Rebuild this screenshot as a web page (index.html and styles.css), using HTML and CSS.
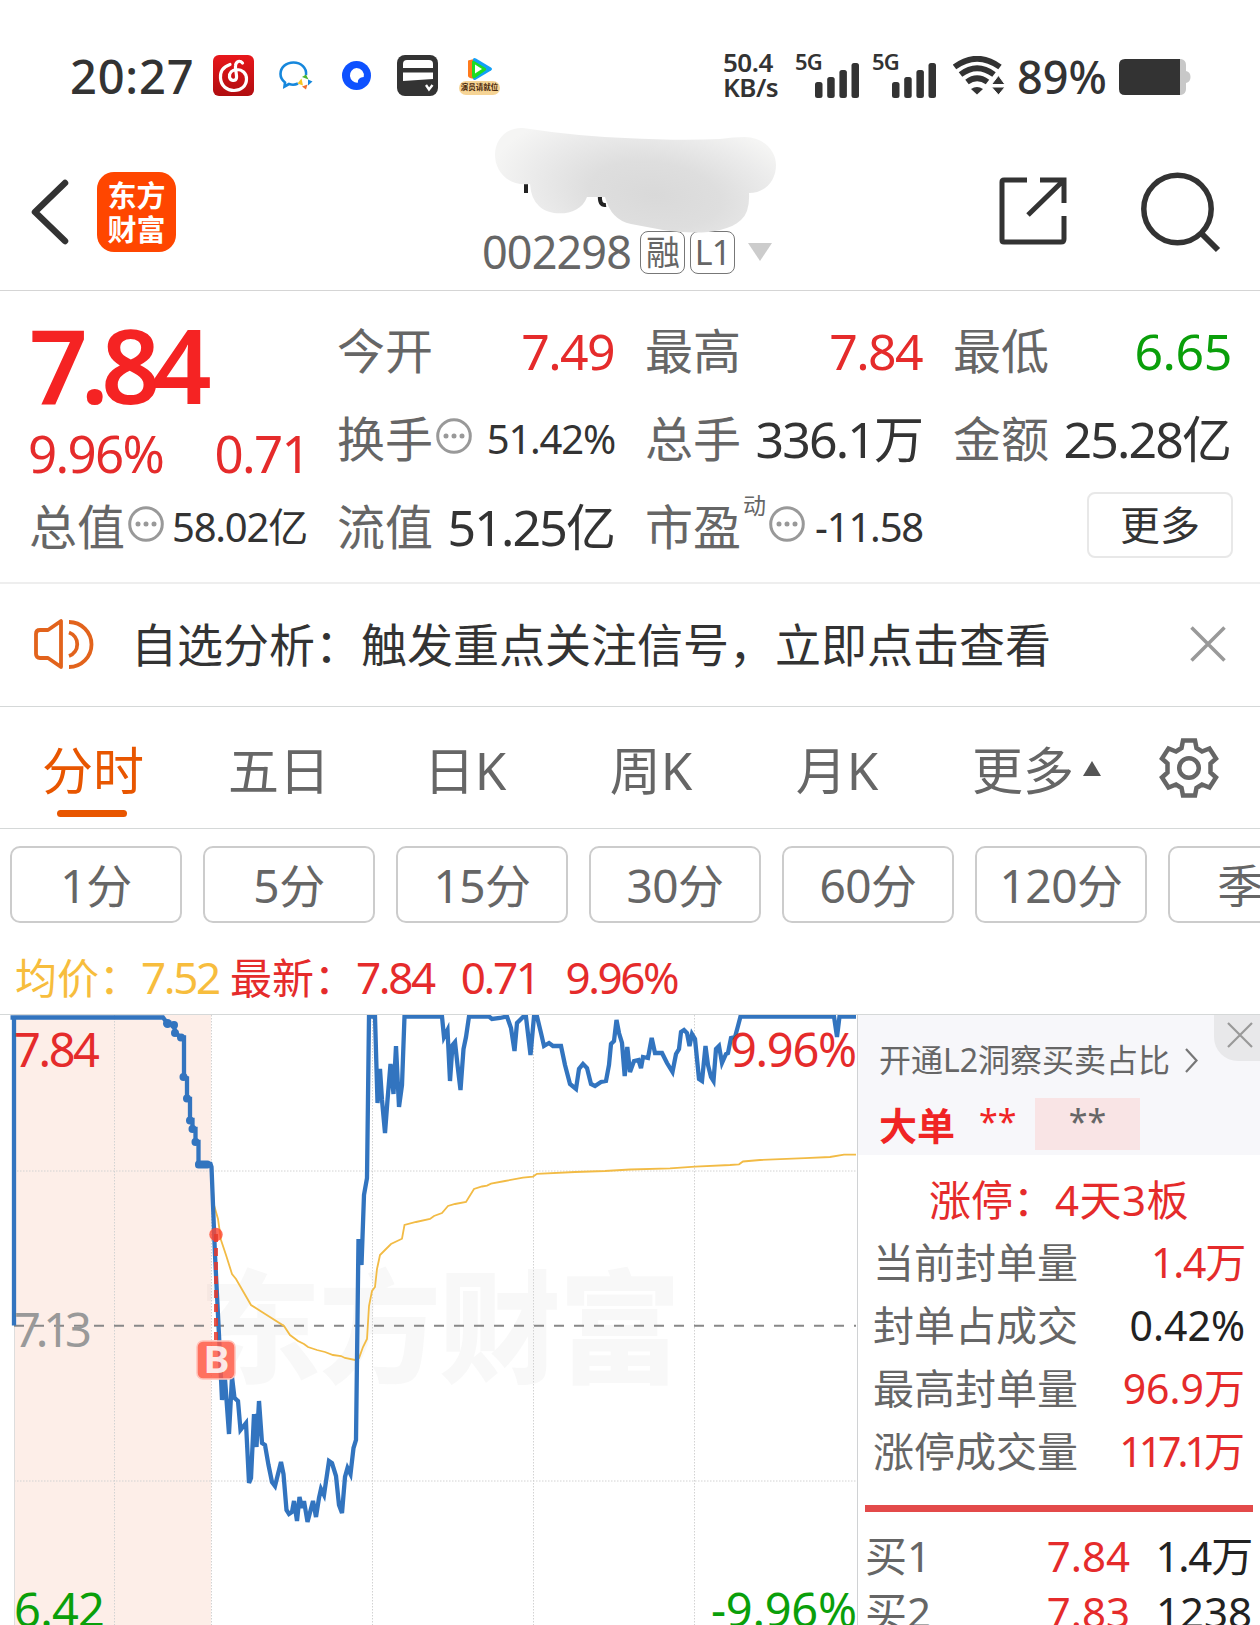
FILE: index.html
```html
<!DOCTYPE html>
<html lang="zh-CN">
<head>
  <meta charset="UTF-8">
  <meta name="viewport" content="width=device-width, initial-scale=1.0">
  <title>002298 分时</title>
  <link rel="stylesheet" href="styles.css">
</head>
<body>
  <div class="phone">
    <div class="status">
      <span class="time">20:27</span>
      <svg class="app-icon music" width="41" height="41" viewBox="0 0 41 41">
        <defs><linearGradient id="redGrad" x1="0" y1="0" x2="0" y2="1"><stop offset="0" stop-color="#e8171b"/><stop offset="1" stop-color="#b00d10"/></linearGradient></defs>
        <rect width="41" height="41" rx="6" fill="url(#redGrad)"/>
        <path d="M17 9.500C10 12 7 17 7.500 23C8 31 14 35.500 21 35.500C28 35.500 33.500 31 33.500 24C33.500 18 29 14.500 24 14.500C19 14.500 16 18 16.500 22C17 26 22.500 26.500 23.500 23C24 20 22 14 22.500 10.500C23 6 27 5 29.500 8" fill="none" stroke="#fff" stroke-width="3.200" stroke-linecap="round"/>
      </svg>
      <svg class="app-icon chat" width="34" height="29" viewBox="0 0 34 29">
        <path d="M27 14C28 7 22 1.500 14.500 1.500C7 1.500 1.500 6.500 1.500 13C1.500 17 3.500 19.500 6 21.500L5.500 25.500L10 23C13 24 16 24 19 22.500" fill="none" stroke="#1687dc" stroke-width="2.600"/>
        <path d="M23 16L27 13.500L29.500 18.500Z" fill="#4bb431"/>
        <path d="M29 18.500L33.500 20.500L29 24.500Z" fill="#1687dc"/>
        <path d="M28.500 23.500L27 28.500L23 25.500Z" fill="#ef6f2e"/>
        <path d="M24 24.500L18.500 22.500L22.500 17.500Z" fill="#f6c522"/>
      </svg>
      <svg class="app-icon" width="29" height="29" viewBox="0 0 29 29">
        <circle cx="14.500" cy="14.500" r="14.500" fill="#0e51ff"/>
        <path d="M14.500 7A7.300 7.300 0 1 0 16 21.600C15.500 18 18 16.500 21.700 16A7.300 7.300 0 0 0 14.500 7Z" fill="#fff"/>
      </svg>
      <svg class="app-icon wallet" width="41" height="41" viewBox="0 0 41 41">
        <rect width="41" height="41" rx="8" fill="#333"/>
        <path d="M6 13V9Q6 5 10 5H32Q36 5 36 9V13Z" fill="#fff"/>
        <path d="M6 17.500H36V24L6 26Z" fill="#fff"/>
        <path d="M29 30L32 34.500L35.500 30" fill="none" stroke="#fff" stroke-width="2.400"/>
      </svg>
      <span class="video">
        <svg width="26" height="24" viewBox="0 0 26 24">
          <path d="M1 4Q1 3 3 3L7 2V22L3 21Q1 20 1 19Z" fill="#ff7a1c"/>
          <path d="M6 3Q6 0 9 1.500L24 10.500Q26 12 24 13.500L9 22.500Q6 24 6 21Z" fill="#12a0f8"/>
          <path d="M5 5Q5 3 7 4L18.500 11Q20 12 18.500 13.500L8 21Q5 22 5 19Z" fill="#1fdc22"/>
          <path d="M8 7.500L15 12L8 16.500Z" fill="#fff"/>
        </svg>
        <small>演员请就位</small>
      </span>
      <span class="speed">50.4<br>KB/s</span>
      <span class="signal"><i>5G</i>
        <svg width="44" height="35" viewBox="0 0 44 35" fill="#333"><rect y="19" width="7.500" height="16" rx="2.500"/><rect x="12.200" y="14" width="7.500" height="21" rx="2.500"/><rect x="24.400" y="7" width="7.500" height="28" rx="2.500"/><rect x="36.500" width="7.500" height="35" rx="2.500"/></svg>
      </span>
      <span class="signal"><i>5G</i>
        <svg width="44" height="35" viewBox="0 0 44 35" fill="#333"><rect y="19" width="7.500" height="16" rx="2.500"/><rect x="12.200" y="14" width="7.500" height="21" rx="2.500"/><rect x="24.400" y="7" width="7.500" height="28" rx="2.500"/><rect x="36.500" width="7.500" height="35" rx="2.500"/></svg>
      </span>
      <svg class="wifi" width="52" height="39" viewBox="0 0 52 39">
        <g fill="none" stroke="#333" stroke-width="5.800">
          <path d="M1.500 11Q24 -5.500 47 11"/>
          <path d="M7.500 18.500Q24 6 41 18.500"/>
          <path d="M14 26Q24 18.500 34.500 26"/>
        </g>
        <path d="M18 33Q24 29 30 33L24 38.500Z" fill="#333"/>
        <path d="M38.500 28.500L45.500 19.500L52 28.500ZM38.500 31H52L45.500 39Z" fill="#333" stroke="#fff"/>
      </svg>
      <span class="percent">89%</span>
      <svg class="battery" width="72" height="36" viewBox="0 0 72 36">
        <path d="M58 0H62Q67 1 67 6V12Q71.500 13 71.500 18T67 24V30Q67 35 62 36H58Z" fill="#c8c8c8"/>
        <path d="M6 0H61V36H6Q0 36 0 30V6Q0 0 6 0Z" fill="#333"/>
      </svg>
    </div>

    <header class="header">
      <svg class="back" width="38" height="66" viewBox="0 0 38 66"><path d="M34 4L4 33L34 62" fill="none" stroke="#333" stroke-width="6.500" stroke-linecap="round" stroke-linejoin="round"/></svg>
      <div class="logo">东方<br>财富</div>
      <div class="stock">
        <svg class="smudge" width="282" height="108" viewBox="0 0 282 108">
          <defs><radialGradient id="smudgeGrad" gradientUnits="userSpaceOnUse" cx="0" cy="0" r="1" gradientTransform="translate(160 68) rotate(8) scale(165 82)"><stop offset="0" stop-color="#d9d9d9"/><stop offset=".4" stop-color="#dedede"/><stop offset=".75" stop-color="#ebebeb"/><stop offset="1" stop-color="#f5f5f4"/></radialGradient></defs>
          <path d="M31 54V66M105 68Q104 79 111 78" fill="none" stroke="#222" stroke-width="4"/>
          <path d="M28 1Q80 9 130 11Q185 14 225 12Q238 10 250 10C270 11 281 24 281 38C281 54 270 66 254 66Q255 85 246 93C230 108 195 107 168 103L136 97Q116 93 110 70L92 70C85 90 55 90 44 79Q36 72 35 57C12 60 0 43 0 28C0 12 12 0 28 1Z" fill="url(#smudgeGrad)"/>
        </svg>
        <div class="code-row">
          <span class="code">002298</span><span class="badge">融</span><span class="badge">L1</span><span class="caret"></span>
        </div>
      </div>
      <svg class="share" width="68" height="68" viewBox="0 0 68 68"><path d="M28 3H5Q3 3 3 5V63Q3 65 5 65H62Q65 65 65 62V39M41 3H65V26M65 3L29 38" fill="none" stroke="#333" stroke-width="5"/></svg>
      <svg class="search" width="80" height="81" viewBox="0 0 80 81"><circle cx="36.500" cy="37" r="33.700" fill="none" stroke="#333" stroke-width="5.500"/><path d="M60 61L77 78" stroke="#333" stroke-width="6"/></svg>
    </header>

    <section class="quote">
      <div class="price-box">
        <div class="price">7.84</div>
        <div class="change"><span>9.96%</span><span>0.71</span></div>
      </div>
      <div class="cell"><label>今开</label><b class="red">7.49</b></div>
      <div class="cell"><label>最高</label><b class="red">7.84</b></div>
      <div class="cell"><label>最低</label><b class="green">6.65</b></div>
      <div class="cell"><label>换手</label><svg class="dots" width="36" height="36" viewBox="0 0 36 36"><circle cx="18" cy="18" r="16.300"/><path d="M10 18h.01M18 18h.01M26 18h.01"/></svg><b class="small">51.42%</b></div>
      <div class="cell"><label>总手</label><b>336.1万</b></div>
      <div class="cell"><label>金额</label><b>25.28亿</b></div>
      <div class="cell"><label>总值</label><svg class="dots" width="36" height="36" viewBox="0 0 36 36"><circle cx="18" cy="18" r="16.300"/><path d="M10 18h.01M18 18h.01M26 18h.01"/></svg><b class="small">58.02亿</b></div>
      <div class="cell"><label>流值</label><b>51.25亿</b></div>
      <div class="cell"><label>市盈</label><sup>动</sup><svg class="dots" width="36" height="36" viewBox="0 0 36 36"><circle cx="18" cy="18" r="16.300"/><path d="M10 18h.01M18 18h.01M26 18h.01"/></svg><b class="small">-11.58</b></div>
      <div class="cell more-cell"><button class="more">更多</button></div>
    </section>

    <div class="notice">
      <svg width="60" height="52" viewBox="0 0 60 52" fill="none" stroke="#e2631c" stroke-width="3.800" stroke-linejoin="round">
        <path d="M2 16Q2 12 6 12H14L27 3V49L14 40H6Q2 40 2 36Z"/>
        <path d="M35 14.500A12.500 12.500 0 0 1 35 38M35 4A22.500 22.500 0 0 1 35 49"/>
      </svg>
      <p>自选分析：触发重点关注信号，立即点击查看</p>
      <svg width="36" height="36" viewBox="0 0 36 36"><path d="M1.500 1.500L34.500 34.500M34.500 1.500L1.500 34.500" stroke="#999" stroke-width="3.500"/></svg>
    </div>

    <nav class="tabs">
      <span class="active">分时</span>
      <span>五日</span>
      <span>日K</span>
      <span>周K</span>
      <span>月K</span>
      <span class="drop">更多</span>
      <svg class="gear" width="60" height="60" viewBox="0 0 60 60" fill="none" stroke="#666" stroke-width="4.500">
        <path d="M24 2.500H36L37.500 10L43 13.500L50.500 10.500L57 20.500L51.500 25.500V34.500L57 39.500L50.500 49.500L43 46.500L37.500 50L36 57.500H24L22.500 50L17 46.500L9.500 49.500L3 39.500L8.500 34.500V25.500L3 20.500L9.500 10.500L17 13.500L22.500 10Z"/>
        <circle cx="30" cy="30" r="9.800"/>
      </svg>
    </nav>

    <div class="periods">
      <span>1分</span><span>5分</span><span>15分</span><span>30分</span><span>60分</span><span>120分</span><span>季K</span>
    </div>

    <div class="legend">
      <span class="avg">均价：<em>7.52</em></span>
      <span class="red">最新：<em>7.84</em><em>0.71</em><em>9.96%</em></span>
    </div>

    <div class="main">
      <svg class="chart" width="857" height="610" viewBox="0 0 857 610">
        <rect x="14" width="197" height="610" fill="#fdeee8"/>
        <text class="watermark" x="199" y="358" textLength="482">东方财富</text>
        <g class="grid">
          <path d="M114.500 0V610M211.500 0V610M372.500 0V610M533.500 0V610M694.500 0V610M14 156H856M14 466H856"/>
        </g>
        <path d="M14.500 311V610" stroke="#ddd"/>
        <path class="base" d="M14 310.700H856"/>
        <path class="avg-line" d="M212 160L214 190L218 204L221 225L226 240L232 259L236 264L251 290L262 297L284 311L290 320L298 326L304 329L308 332L317 335L325 337L333 340L341 341L345 343L355 345L359 343L363 332L367 324L369 291L372 276L375 272L377 254L380 240L386 234L391 229L402 223.700L404.500 210L416 207L430 204L434 201L442 198L448 191L455 189L466 187L474 174L482 171.500L487 170.600L491 168.600L505 166L523 162.700L533 161.600L537 158.800L575 157L605 156L630 154.500L670 153.300L695 151.600L730 150L739 149.300L743 146.500L760 145L805 143.200L830 142L844 139.700H856"/>
        <path class="price-line" d="M10.500 2.500H163L168 9H173L176 18.500L181 22.500H184V62L187 63V84H190V105H192.500V114H195.500V127H198.500V149H210.500L211.500 152L215 240L219 320L222 385L225 364L229 419L232 362L234.500 383L238 386L240.500 415L246 408L249 468L251 463L254 399L256.500 432L259 386L262 428L265 430L268.500 450L272 467L275 471L281 447L283.500 459L286.500 495L289 499L292 497L294 486L297 506L299.500 482L302 493L304 486L307.500 507L313 486L316 502L319 483L321 474L324 480L329 446L332 448L336 461L339 490L342 498L345 462L347.500 453L350.500 459L353.500 433L356 425L358.500 224L361.500 250L364 180L367 163L369 1.500H375L377.500 88L380 54L382 85L385 118L387.500 85L390.500 49L393.500 79L396 31L399 92L402 70L404.500 1.500H442L444 22L447.500 15L450 66L452.500 30L455 27L457.500 50L460.500 75L463.500 34L466 22L469 1.500H489L492 4L500 3L507 1.500L511 13L514.500 36L517 8L523 2H526L530.500 40L534 1.500H537L541 18L544 31L549 28L553 31H561L565 50L570 69L576 74L579 54L583 49L587 53L591 69L595 71L601 67L606 66L609 50L611 29L614 26L616.500 5L619 18L622 28L624.700 61L627.300 32L630 57L634 46L638.500 45L641 53L643 42L648 43L651.700 23L655 38H662L667 48L672.500 57L676 39L679 34L681 17L684 15L687 18L689.500 31L692 19L695 24L699 64L702 66L705.500 31L708 50L711 62L713.500 66L716 34L719 31L722 48L726 39L728 38L731 23L735 22L738 11L740.500 1.500H834L837 22L839.500 1.500H856"/>
        <path class="price-line" d="M14 2V310.500"/>
        <g fill="#3274bf">
          <circle cx="167.500" cy="8.500" r="4.500"/><circle cx="174" cy="10" r="4"/><circle cx="175" cy="18" r="4"/><circle cx="181" cy="22.500" r="4"/><circle cx="183.500" cy="62" r="4"/><circle cx="187" cy="83.500" r="4"/><circle cx="190" cy="105.500" r="4"/><circle cx="192.500" cy="114" r="4"/><circle cx="195.500" cy="127" r="4"/><rect x="195" y="145.500" width="16" height="8" rx="3.500"/>
        </g>
        <circle cx="216" cy="219.500" r="6.700" fill="#ff4530" opacity=".8"/>
        <path d="M216 219V326" stroke="#e8392c" stroke-opacity=".85" stroke-width="4" stroke-dasharray="8 6"/>
        <rect x="197" y="326" width="38" height="38" rx="6" fill="#ff5a47" fill-opacity=".85" stroke="#ffc3ba" stroke-width="1.500"/>
        <text class="buy" x="203.500" y="358" textLength="26" lengthAdjust="spacingAndGlyphs">B</text>
        <text class="axis up" x="14" y="52" textLength="86">7.84</text>
        <text class="axis flat" x="14" y="332" textLength="78">7.13</text>
        <text class="axis down" x="14" y="612" textLength="91">6.42</text>
        <text class="axis up" x="730" y="52" textLength="127">9.96%</text>
        <text class="axis down" x="711" y="612" textLength="146">-9.96%</text>
      </svg>

      <aside class="side">
        <div class="l2">
          <div class="l2-title">开通L2洞察买卖占比 <svg width="15" height="27" viewBox="0 0 15 27"><path d="M2 2L12.500 13.500L2 25" fill="none" stroke="#777" stroke-width="2.200"/></svg></div>
          <div class="l2-row"><strong>大单</strong><span class="stars">**</span><span class="mask">**</span></div>
          <div class="l2-close"><svg width="26" height="26" viewBox="0 0 26 26"><path d="M1 1L25 25M25 1L1 25" stroke="#999" stroke-width="2.200"/></svg></div>
        </div>
        <div class="limit">涨停：<span>4天3板</span></div>
        <div class="row"><span>当前封单量</span><b class="red near">1.4万</b></div>
        <div class="row"><span>封单占成交</span><b>0.42%</b></div>
        <div class="row"><span>最高封单量</span><b class="red">96.9万</b></div>
        <div class="row"><span>涨停成交量</span><b class="red tight">117.1万</b></div>
        <div class="bar"></div>
        <div class="order"><span>买1</span><b class="red">7.84</b><b class="near">1.4万</b></div>
        <div class="order"><span>买2</span><b class="red">7.83</b><b>1238</b></div>
      </aside>
    </div>
  </div>
</body>
</html>
```
FILE: styles.css
```css
* {
  box-sizing: border-box;
}
body {
  margin: 0;
  background: #fff;
  color: #333;
  font-family: "Noto Sans", "Noto Sans CJK SC", sans-serif;
}
svg {
  display: block;
  flex: none;
}
b, em, i {
  font-weight: 400;
  font-style: normal;
}
.red {
  color: #e52b2b;
}
.green {
  color: #0a9f0a;
}
.phone {
  width: 1260px;
  height: 1625px;
  overflow: hidden;
}

/* status bar */
.status {
  display: flex;
  align-items: center;
  height: 151px;
  padding-left: 70px;
}
.time {
  width: 143px;
  font-size: 47px;
  line-height: 50px;
  font-weight: 500;
  letter-spacing: 0.8px;
}
.app-icon {
  margin-right: 26px;
}
.music {
  margin-right: 25px;
}
.chat {
  margin-right: 29px;
}
.wallet {
  margin-right: 21px;
}
.video {
  width: 41px;
  margin-right: 223px;
  display: flex;
  flex-direction: column;
  align-items: center;
}
.video small {
  width: 41px;
  height: 14px;
  border-radius: 7px;
  background: #f6d495;
  color: #4b2a0c;
  font-size: 7.500px;
  font-weight: 700;
  line-height: 13px;
  text-align: center;
  white-space: nowrap;
}
.speed {
  width: 72px;
  margin-top: -2px;
  font-size: 26px;
  line-height: 25px;
  font-weight: 600;
  letter-spacing: -0.5px;
}
.signal {
  display: flex;
  width: 77px;
  height: 46px;
}
.signal i {
  width: 20px;
  font-size: 22px;
  line-height: 16px;
  font-weight: 600;
  letter-spacing: -0.8px;
}
.signal svg {
  margin-top: 10px;
}
.wifi {
  margin-left: 4px;
}
.percent {
  width: 114px;
  padding-left: 12px;
  margin-top: 2px;
  font-size: 45px;
  line-height: 50px;
  font-weight: 500;
}
.battery {
  margin-top: 2px;
}

/* header */
.header {
  display: flex;
  height: 140px;
  padding: 21px 0 0 31px;
  border-bottom: 1px solid #d5d5d5;
}
.back {
  margin-top: 7px;
}
.logo {
  width: 79px;
  height: 80px;
  margin-left: 28px;
  padding-top: 5px;
  border-radius: 17px;
  background: #ff4600;
  color: #fff;
  font: 700 29px/34px "Noto Sans CJK SC", sans-serif;
  text-align: center;
}
.stock {
  position: relative;
  width: 823px;
  padding-left: 306px;
}
.smudge {
  position: absolute;
  left: 319px;
  top: -45px;
  z-index: 1;
}
.code-row {
  display: flex;
  align-items: center;
  margin-top: 57px;
  height: 46px;
}
.code {
  width: 158px;
  font-size: 45px;
  line-height: 46px;
  letter-spacing: -0.9px;
  color: #666;
}
.badge {
  width: 45px;
  height: 43px;
  margin-right: 5px;
  border: 1.5px solid #777;
  border-radius: 8px;
  color: #666;
  font-size: 34px;
  line-height: 40px;
  text-align: center;
  letter-spacing: -1px;
}
.caret {
  margin-left: 8px;
  border: 12.500px solid transparent;
  border-top: 18px solid #ccc;
  border-bottom: 0;
}
.share {
  margin-top: 5px;
}
.search {
  margin-left: 74px;
}

/* quote */
.quote {
  display: grid;
  grid-template-columns: repeat(4, 277px);
  grid-template-rows: repeat(3, 88px);
  column-gap: 31px;
  height: 293px;
  padding: 16px 0 0 29px;
  border-bottom: 2px solid #eee;
}
.price-box {
  grid-row: span 2;
}
.price {
  padding-top: 7px;
  color: #f52323;
  font-size: 103px;
  line-height: 100px;
  font-weight: 600;
  letter-spacing: -7.5px;
}
.change {
  display: flex;
  justify-content: space-between;
  margin: 12px -3px 0 -1px;
  color: #e52b2b;
  font-size: 51px;
  line-height: 54px;
  letter-spacing: -1.7px;
}
.cell {
  display: flex;
  align-items: center;
  white-space: nowrap;
}
.cell label {
  color: #666;
  font-size: 48px;
  line-height: 60px;
}
.cell b {
  margin-left: auto;
  font-size: 50px;
  line-height: 60px;
  letter-spacing: -1.9px;
  margin-right: 0;
}
.cell .red {
  letter-spacing: -1.6px;
}
.cell .green {
  letter-spacing: -0.4px;
  margin-right: -2px;
}
.cell .small {
  font-size: 40px;
  letter-spacing: -1.2px;
  margin-right: -1px;
}
.dots {
  margin: -7px 0 0 3px;
  fill: none;
  stroke: #999;
  stroke-width: 3;
}
.dots path {
  stroke-width: 5;
  stroke-linecap: round;
}
.cell sup {
  width: 25px;
  margin: -45px 0 0 2px;
  color: #666;
  font-size: 23px;
  line-height: 24px;
}
.cell sup + .dots {
  margin-left: 1px;
}
.more-cell {
  justify-content: flex-end;
}
.more {
  width: 146px;
  height: 66px;
  margin: -4px -3px 0 0;
  padding: 0;
  border: 2px solid #e8e8e8;
  border-radius: 8px;
  background: #fff;
  color: #333;
  font: 40px/60px "Noto Sans", "Noto Sans CJK SC", sans-serif;
}

/* notice */
.notice {
  display: flex;
  align-items: center;
  height: 123px;
  padding: 0 34px 2px 34px;
  border-bottom: 1px solid #d5d8d8;
}
.notice p {
  flex: 1;
  margin: 0 0 0 37px;
  font-size: 46px;
  line-height: 60px;
}

/* tabs */
.tabs {
  display: flex;
  align-items: center;
  height: 122px;
  padding-right: 41px;
  border-bottom: 1px solid #d5d8d8;
}
.tabs span {
  position: relative;
  width: 186px;
  padding-top: 4px;
  color: #666;
  font-size: 51px;
  line-height: 70px;
  text-align: center;
}
.tabs .active {
  color: #e85600;
}
.tabs .active::after {
  content: "";
  position: absolute;
  left: 57px;
  bottom: -12px;
  width: 70px;
  height: 7px;
  border-radius: 4px;
  background: #e85600;
}
.tabs .drop {
  width: 229px;
  padding-left: 42px;
  text-align: left;
}
.drop::after {
  content: "";
  display: inline-block;
  margin-left: 9px;
  vertical-align: 14px;
  border: 9.500px solid transparent;
  border-top: 0;
  border-bottom: 15px solid #555;
}

/* periods */
.periods {
  display: flex;
  gap: 21px;
  padding: 17px 0 0 10px;
  height: 113px;
}
.periods span {
  flex: none;
  width: 172px;
  height: 77px;
  border: 2px solid #ccc;
  border-radius: 10px;
  color: #666;
  font-size: 46px;
  line-height: 75px;
  text-align: center;
  letter-spacing: -0.5px;
}

/* legend */
.legend {
  display: flex;
  height: 73px;
  padding-left: 15px;
  font-size: 42px;
  line-height: 71px;
  border-bottom: 1px solid #d5d8d8;
}
.legend em {
  font-size: 44px;
  letter-spacing: -2.4px;
}
.legend .avg {
  width: 215px;
  color: #f7bd3d;
}
.legend em + em {
  margin-left: 27px;
}

/* chart */
.main {
  display: flex;
}
.chart text {
  font-family: "Noto Sans", "Noto Sans CJK SC", sans-serif;
}
.watermark {
  font-size: 122px;
  font-weight: 900;
  fill: #555;
  fill-opacity: .045;
}
.grid {
  fill: none;
  stroke: #d2d2d2;
  stroke-dasharray: 1.500 1.500;
}
.base {
  stroke: #888;
  stroke-width: 2;
  stroke-dasharray: 10 10;
}
.avg-line {
  fill: none;
  stroke: #f2bb45;
  stroke-width: 1.800;
}
.price-line {
  fill: none;
  stroke: #3274bf;
  stroke-width: 4.300;
}
.axis {
  font-size: 47px;
}
.up {
  fill: #e52b2b;
}
.flat {
  fill: #999;
}
.down {
  fill: #0a9f0a;
}
.chart .buy {
  font-size: 37px;
  font-weight: 700;
  fill: #fff;
  fill-opacity: .85;
}

/* side panel */
.side {
  width: 403px;
  height: 610px;
  border-left: 1px solid #d0d2d4;
  overflow: hidden;
}
.l2 {
  position: relative;
  height: 140px;
  padding: 24px 0 0 21px;
  background: #f7f7fa;
}
.l2-title {
  display: flex;
  align-items: center;
  gap: 14px;
  color: #666;
  font-size: 32px;
  line-height: 42px;
  white-space: nowrap;
}
.l2-row {
  display: flex;
  align-items: center;
  margin-top: 17px;
  height: 52px;
}
.l2-row strong {
  width: 100px;
  margin-top: -2px;
  color: #f02424;
  font-size: 38px;
}
.stars {
  width: 56px;
  margin-top: -6px;
  color: #f02424;
  font-size: 34px;
  line-height: 40px;
}
.mask {
  width: 105px;
  height: 52px;
  background: #f9e4e5;
  color: #666;
  font-size: 34px;
  line-height: 46px;
  text-align: center;
}
.l2-close {
  position: absolute;
  right: 0;
  top: 0;
  width: 46px;
  height: 46px;
  padding: 7px 0 0 13px;
  border-bottom-left-radius: 24px;
  background: #e8e8ea;
}
.limit {
  height: 76px;
  padding-left: 71px;
  color: #e52b2b;
  font-size: 42px;
  line-height: 89px;
  white-space: nowrap;
}
.limit span {
  letter-spacing: 0.5px;
}
.row {
  display: flex;
  justify-content: space-between;
  height: 63px;
  padding: 0 15px;
  font-size: 41px;
  line-height: 63px;
  white-space: nowrap;
}
.row span,
.order span {
  color: #666;
}
.row b {
  color: #222;
}
.row .red,
.order .red {
  color: #e52b2b;
}
.row .near,
.order .near {
  letter-spacing: -1.2px;
}
.row .tight {
  letter-spacing: -4px;
  margin-right: 4px;
}
.bar {
  height: 7px;
  margin: 22px 7px 16px;
  background: #e34a4a;
}
.order {
  display: grid;
  grid-template-columns: 120px 145px 1fr;
  height: 56px;
  padding: 0 8px 0 7px;
  font-size: 42px;
  line-height: 56px;
  white-space: nowrap;
}
.order b {
  color: #222;
  text-align: right;
}
```
